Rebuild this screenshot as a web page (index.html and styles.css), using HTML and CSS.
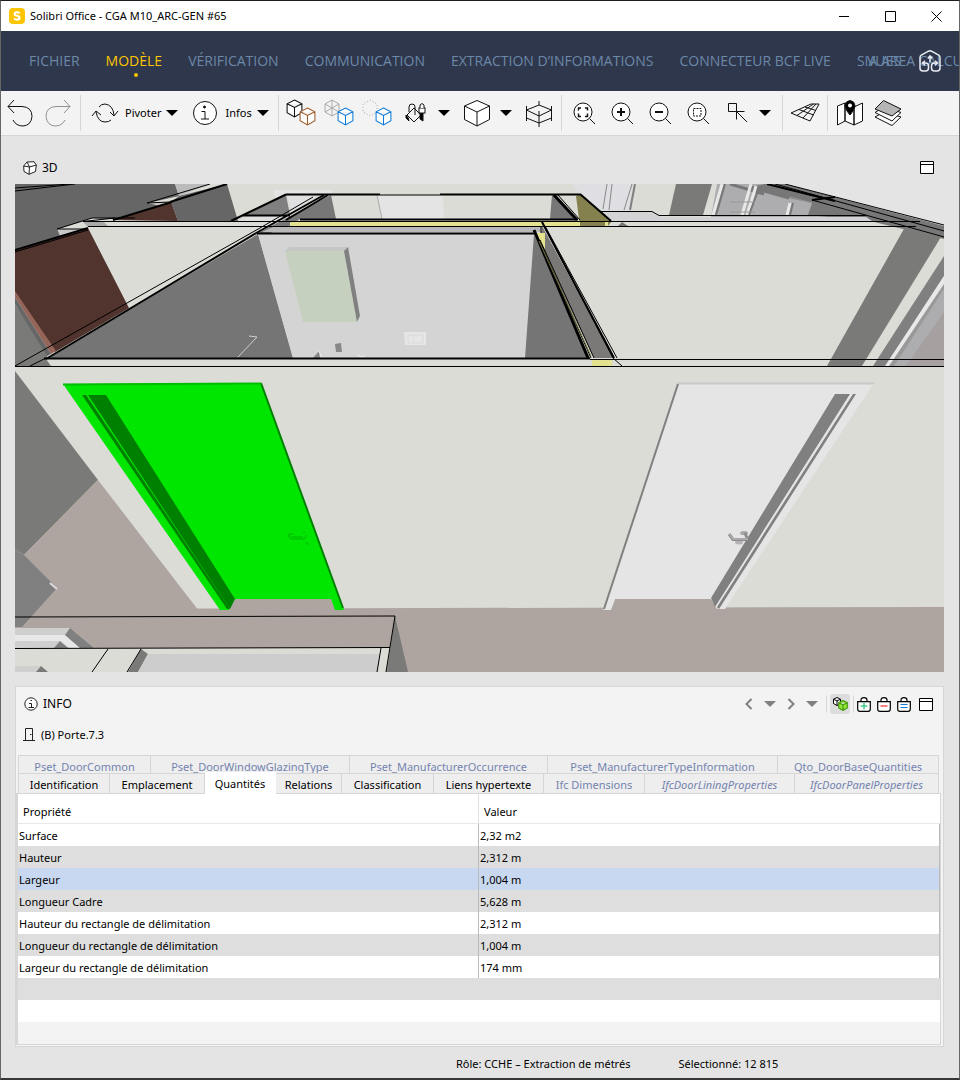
FILE: index.html
```html
<!DOCTYPE html>
<html lang="fr">
<head>
<meta charset="utf-8">
<meta name="viewport" content="width=device-width, initial-scale=1">
<title>Solibri Office - CGA M10_ARC-GEN #65</title>
<link rel="stylesheet" href="styles.css">
</head>
<body>
<svg class="defs" aria-hidden="true">
  <symbol id="cube" viewBox="0 0 16 18"><path d="M8 1 15 4.500V13L8 17 1 13V4.500ZM1 4.500 8 8 15 4.500M8 8V17"/></symbol>
  <symbol id="lens" viewBox="0 0 30 30"><circle cx="14" cy="14" r="9"/><path d="M20.500 20.500 26 26"/></symbol>
  <symbol id="caret" viewBox="0 0 12 6"><path d="M0 0H12L6 6Z"/></symbol>
  <symbol id="frame" viewBox="0 0 14 13"><path d="M.5 .5H13.500V12.500H.5ZM.5 3.500H13.500" fill="#fff" stroke="#000"/></symbol>
  <symbol id="bag" viewBox="0 0 14 15"><path d="M.7 4.700H13.300V12Q13.300 14.300 11 14.300H3Q.7 14.300 .7 12ZM4 4.500V3Q4 .7 7 .7T10 3V4.500" fill="#fff" stroke="#000" stroke-width="1.200"/></symbol>
</svg>
<div class="window">
  <header class="titlebar">
    <svg class="logo" viewBox="0 0 16 16"><rect width="16" height="16" rx="4" fill="#fdc500"/><path d="M10.800 5.300Q9.500 4.200 7.800 4.300 5.600 4.400 5.600 5.900 5.600 7.200 8 7.700 10.600 8.200 10.600 9.900 10.500 11.600 8 11.700 6.300 11.700 5 10.500" fill="none" stroke="#fff" stroke-width="2"/></svg>
    <h1>Solibri Office - CGA M10_ARC-GEN #65</h1>
    <div class="window-buttons">
      <button aria-label="Réduire"><svg viewBox="0 0 11 11"><path d="M0 5.500H10"/></svg></button>
      <button aria-label="Agrandir"><svg viewBox="0 0 11 11"><path d="M.5 .5H10.500V10.500H.5Z"/></svg></button>
      <button aria-label="Fermer"><svg viewBox="0 0 11 11"><path d="M.5 .5 10.500 10.500M10.500 .5 .5 10.500"/></svg></button>
    </div>
  </header>

  <nav class="menu">
    <a href="#fichier">FICHIER</a>
    <a href="#modele" class="active">MODÈLE</a>
    <a href="#verification">VÉRIFICATION</a>
    <a href="#communication">COMMUNICATION</a>
    <a href="#extraction">EXTRACTION D’INFORMATIONS</a>
    <a href="#bcf">CONNECTEUR BCF LIVE</a>
    <a href="#area">SIA AREA CALCULATION</a>
    <div class="menu-end">
      <a href="#vues">VUES</a>
      <button aria-label="Accueil"><svg viewBox="0 0 22 22" fill="none" stroke="#e8ebf2" stroke-width="1.500"><path d="M1 18V7.500Q1 6 2.300 5.200L9.500 1.200Q11 .5 12.500 1.200L19.700 5.200Q21 6 21 7.500V18Q21 21 18 21H15.500Q12.500 21 12.500 18V16Q12.500 13 15.500 13H18M1 18Q1 21 4 21H6.500Q9.500 21 9.500 18V16Q9.500 13 6.500 13H4M11 12V7M8.800 8.500 11 6 13.200 8.500M6 10.800 3.500 13 6 15.200M16 10.800 18.500 13 16 15.200"/></svg></button>
    </div>
  </nav>

  <div class="toolbar" role="toolbar" aria-label="Outils du modèle">
    <button class="tool" aria-label="Annuler"><svg viewBox="0 0 30 30"><path d="M9 2 3 8.500 9 15M3 8.500H17Q27 9 27 18.500 26 27.500 18 28 11 28 8 22"/></svg></button>
    <button class="tool dim" aria-label="Rétablir"><svg viewBox="0 0 30 30"><path d="M21 2 27 8.500 21 15M27 8.500H13Q3 9 3 18.500 4 27.500 12 28 19 28 22 22"/></svg></button>
    <span class="sep"></span>
    <button class="tool labelled"><svg viewBox="0 0 30 30"><path d="M9 9Q11 6 15 6 23 7 24 17M21 22Q19 24 15 24 8 24 6 14M20 14 24 18 28 13M2 18 6 13 11 17"/></svg>Pivoter<svg class="caret"><use href="#caret"/></svg></button>
    <button class="tool labelled"><svg viewBox="0 0 30 30"><circle cx="15" cy="15" r="11.500" fill="#fff"/><circle cx="14.500" cy="9" r="1" fill="#000"/><path d="M11.500 13.500H15V21M11 21H19"/></svg>Infos<svg class="caret"><use href="#caret"/></svg></button>
    <span class="sep"></span>
    <button class="tool" aria-label="Afficher"><svg viewBox="0 0 30 30"><use href="#cube" x="0" y="1" width="17" height="19"/><use href="#cube" x="13" y="9" width="17" height="19" stroke="#9c5c2c"/></svg></button>
    <button class="tool" aria-label="Transparence"><svg viewBox="0 0 30 30"><path d="M8 2 15 6V14L8 18 1 14V6ZM1 6 15 14M15 6 1 14M8 2V18" stroke="#aaa"/><use href="#cube" x="13" y="9" width="17" height="19" stroke="#107cd8"/></svg></button>
    <button class="tool" aria-label="Masquer"><svg viewBox="0 0 30 30"><path d="M8 2 15 6V14L8 18 1 14V6Z" stroke="#aaa" stroke-dasharray="1 2"/><use href="#cube" x="13" y="9" width="17" height="19" stroke="#107cd8"/></svg></button>
    <button class="tool" aria-label="Couleurs"><svg viewBox="0 0 30 30"><path d="M7 17 14 10 21 17 14 24ZM9 14V9Q9 6 12 6T15 9V17"/><path d="M6 17Q9 20 9 23L6 20ZM20 15H23V23L20 21Z" fill="#000"/><rect x="19" y="10" width="6" height="5"/><path d="M20 10V7Q22 4 24 7V10"/></svg></button>
    <button class="tool drop" aria-label="Options de couleurs"><svg class="caret"><use href="#caret"/></svg></button>
    <button class="tool" aria-label="Vue"><svg viewBox="0 0 30 30"><path d="M15 2.500 27.500 8V21.500L15 28 2.500 21.500V8Z" class="solid"/><path d="M2.500 8 15 14 27.500 8M15 14V28"/></svg></button>
    <button class="tool drop" aria-label="Options de vue"><svg class="caret"><use href="#caret"/></svg></button>
    <button class="tool" aria-label="Coupe"><svg viewBox="0 0 30 30"><g fill="none"><path d="M2.500 8V23M27.500 8V23M15 3V7M15 13V29M2.500 12 15 7 27.500 12 15 18ZM2.500 20 15 25 27.500 20"/></g></svg></button>
    <span class="sep"></span>
    <button class="tool" aria-label="Zoom étendu"><svg viewBox="0 0 30 30"><use href="#lens"/><path d="M9.500 12.500V10H12M16 10H18.500V12.500M18.500 15.500V18.500H16M12 18.500H9.500V15.500" stroke-width="1.500"/></svg></button>
    <button class="tool" aria-label="Zoom avant"><svg viewBox="0 0 30 30"><use href="#lens"/><path d="M10 14H18M14 10V18" stroke-width="2"/></svg></button>
    <button class="tool" aria-label="Zoom arrière"><svg viewBox="0 0 30 30"><use href="#lens"/><path d="M10 14H18" stroke-width="2"/></svg></button>
    <button class="tool" aria-label="Zoom fenêtre"><svg viewBox="0 0 30 30"><use href="#lens"/><path d="M10.500 10.500H18V18H10.500Z" stroke-dasharray="2 1"/></svg></button>
    <button class="tool" aria-label="Sélection"><svg viewBox="0 0 30 30"><path d="M7.500 5.500H15.500V13.500H7.500ZM15.500 13.500H23.500M15.500 13.500V21.500M15.500 13.500 26 24"/></svg></button>
    <button class="tool drop" aria-label="Options de sélection"><svg class="caret"><use href="#caret"/></svg></button>
    <span class="sep"></span>
    <button class="tool" aria-label="Grille"><svg viewBox="0 0 30 30"><path d="M1 15 21 6H29L20 23ZM7 17.500 23.500 6M13 20 26 6M15 9 26 12.500M9 11.500 23.500 17"/></svg></button>
    <span class="sep"></span>
    <button class="tool" aria-label="Carte"><svg viewBox="0 0 30 30"><path d="M2.500 8 10 5V23L2.500 27ZM10 5 19 9V27L10 23ZM19 9 27.500 5V23L19 27Z" class="solid"/><path d="M15 17Q10 11 10 7.500 10.500 3 15 2.500 19.500 3 20 7.500 20 11 15 17Z" fill="#000"/><circle cx="15" cy="7.500" r="2" stroke="none"/></svg></button>
    <button class="tool" aria-label="Calques"><svg viewBox="0 0 30 30"><path d="M2 19 19 27.500 28 19 11 14Z" class="solid"/><path d="M2 14.500 19 23 28 14.500 11 9Z"/><path d="M2 11 10.500 2.500 28 11 19 18Z" fill="#b5b5b5"/></svg></button>
  </div>

  <main>
    <section class="view" aria-labelledby="view-title">
      <header class="pane-head">
        <svg class="view-icon" viewBox="0 0 14 14" fill="#fff" stroke="#222"><path d="M.7 5 4 1 11 .7 13.300 4 12.500 10.500 6 13.300 1 10.500ZM.7 5 6.500 6 13.300 4M6.500 6 6 13.300M4 1 6.500 6"/></svg>
        <h2 id="view-title">3D</h2>
        <button class="pane-max" aria-label="Agrandir la vue 3D"><svg><use href="#frame"/></svg></button>
      </header>
      <svg class="scene" viewBox="15 184 929 488" role="img" aria-label="Vue 3D, porte sélectionnée en vert">
        <rect x="15" y="184" width="929" height="488" fill="#dadcd5"/>
        <!-- back-left walls -->
        <path d="M15 184H175L179 196 148 203 171 202 113 219 92 218 58 229 84 229 15 250Z" fill="#666"/>
        <path d="M175 184H210L179 196Z" fill="#bbb"/>
        <path d="M179 196 227 184 238 221H178L171 202Z" fill="#666"/>
        <path d="M148 203 171 202 160 206Z" fill="#ccc"/>
        <path d="M113 220 171 202 178 221ZM15 250 88 228 129 308 55 352 15 292Z" fill="#50342d"/>
        <path d="M15 304 48 354 46 360 15 367Z" fill="#7a7a78"/>
        <path d="M15 291 56 351 51 354 15 297Z" fill="#96655a"/>
        <path d="M15 297 51 354 47 356 15 304Z" fill="#666"/>
        <path d="M57 229 84 229 60 236Z" fill="#c8c8c8"/>
        <path d="M83 222H104L109 227H88Z" fill="#a9a9a9"/>
        <g fill="none" stroke="#000">
          <path d="M15 188 70 184M15 191 75 184M147 203 210 184M147 203 170 202M57 229 92 218H115M57 229H88M15 252 88 230"/>
          <path d="M170 202 227 184M15 250 88 228M113 220 172 202" stroke-width="2"/>
        </g>
        <!-- small room, top left -->
        <path d="M273 190H332V195H286L276 200Z" fill="#e4e4e4"/>
        <path d="M242 215 286 195 290 215Z" fill="#808080"/>
        <path d="M288 196H316L291 213Z" fill="#e0e0e0"/>
        <path d="M243 216H287L275 221H246Z" fill="#e0e0e0"/>
        <path d="M258 233 331 195 336 219H300L290 226 270 233Z" fill="#777"/>
        <!-- upper room -->
        <path d="M377 195H443L444 219H382Z" fill="#e4e4e4"/>
        <path d="M377 195 382 219" stroke="#aaa"/>
        <path d="M552 195 550 219H574L556 195Z" fill="#777"/>
        <path d="M576 196 580 226H608L612 221 580 194Z" fill="#84814f"/>
        <path d="M290 221H608V226.500H290Z" fill="#e3e291"/>
        <path d="M580 221H605V226H580Z" fill="#84814f"/>
        <path d="M273 227H542V232H262Z" fill="#b8b8b8"/>
        <!-- back-right rooms -->
        <path d="M573 184H632L630 211H603L579 193Z" fill="#dfdfe3"/>
        <path d="M607 184 603 209M612 184 609 210M632 184 624 210" stroke="#888" fill="none"/>
        <path d="M635 184 630 210" stroke="#808080" stroke-width="2"/>
        <path d="M676 184H712L703 215H669Z" fill="#7a7a78"/>
        <path d="M717 184H765L870 217H711Z" fill="#adadb0"/>
        <path d="M765 184H785L944 225V239L870 221 808 215 812 203 789 198 750 187Z" fill="#777"/>
        <path d="M730 184 764 194M750 187 789 198" stroke="#777" stroke-width="3"/>
        <path d="M722 184 713 215M751 184 742 215M756 186 747 215M790 203 787 215" stroke="#e8e8e8" stroke-width="3"/>
        <path d="M725 184 716 215M759 188 749 215M793 203 790 215" stroke="#777" stroke-width="2"/>
        <path d="M730 202H755M730 212H755M790 197 812 203" stroke="#999"/>
        <path d="M603 212H652L660 217H866L872 221H612Z" fill="#d3d3d5"/>
        <path d="M785 184H944V226Z" fill="#e4e4e4"/>
        <path d="M622 222 628 226H618Z" fill="#777"/>
        <g fill="none" stroke="#000">
          <path d="M785 184 944 225M775 184 944 231M812 200 944 237M83 221.500H920M88 226.500H916M83 221.500 115 218H135"/>
          <path d="M600 211.500H652L659 215.500H866"/>
          <path d="M767 184 835 201M812 200 835 197" stroke-width="2"/>
        </g>
        <path d="M905 227 941 237 862 366H827Z" fill="#7a7a78"/>
        <path d="M944 256V276L886 366H873Z" fill="#808080"/>
        <path d="M944 276V286L891 366H885Z" fill="#e8e8e8"/>
        <path d="M944 284V366H889Z" fill="#999"/>
        <path d="M944 289V366H894Z" fill="#adadb0"/>
        <path d="M944 312V366H906Z" fill="#a6a0a0"/>
        <!-- main room -->
        <path d="M46 359 258 234 293 358Z" fill="#757575"/>
        <path d="M258 234H534L525 358H293Z" fill="#d4d4d4"/>
        <path d="M534 234 525 358H590Z" fill="#757575"/>
        <path d="M542 226 614 358H594L540 246Z" fill="#7a7978"/>
        <path d="M536 233H545V250L539 240Z" fill="#e3e291"/>
        <path d="M592 360H612V366H592Z" fill="#e3e291"/>
        <path d="M15 367 31 359H46L51 366Z" fill="#7a7a78"/>
        <path d="M285 251H344L357 322H303Z" fill="#c6d0be"/>
        <path d="M285 251 289 247H347L344 251Z" fill="#c5c5c5"/>
        <path d="M344 251 348 247 360 316 357 322Z" fill="#808080"/>
        <path d="M404 332H426V345H405Z" fill="#e6e6e6"/>
        <path d="M408 335H423V343H408ZM414 335V343" fill="none" stroke="#dadada"/>
        <path d="M335 344 341 343 342 352H336ZM313 358 319 351 320 358Z" fill="#888"/>
        <path d="M318 350 322 357M365 356Q362 358 357 355" stroke="#eee" fill="none"/>
        <path d="M238 357 257 337 249 336" fill="none" stroke="#d2cdd0"/>
        <g fill="none" stroke="#000">
          <path d="M15 366 127 303 260 228M30 366 46 358M15 366.500H944M590 359.500H944"/>
          <path d="M46 359 258 232 324 195M231 221 286 194.500M243 215.500H290M286 220 328 195" stroke-width="2"/>
          <path d="M260 228 313 197"/>
          <path d="M286 194.500H380M440 194.500H580M300 219.500H578M44 358.500H590M580 194 611 221" stroke-width="2"/>
          <path d="M380 195H440M541 227V233"/>
          <path d="M257 233.500H535" stroke-width="2"/>
          <path d="M554 195 577 220M534 230 588 358" stroke-width="3"/>
          <path d="M558 195 580 220M538 238 591 358M540 240 594 358M542 222 613 358 622 366M545 226 617 358"/>
          <path d="M542 222 614 358" stroke-width="2"/>
        </g>
        <path d="M539 241 591 356" stroke="#77743d"/>
        <!-- corridor floor -->
        <path d="M15 371 98 480 24 555 15 549Z" fill="#7a7a78"/>
        <path d="M98 480 197 608.500 944 607V672H15V549L24 555Z" fill="#aea5a0"/>
        <path d="M15 549 24 555 57 588 22 627H15Z" fill="#808080"/>
        <path d="M50 583 57 589" stroke="#ddd" stroke-width="2"/>
        <!-- selected door -->
        <path d="M235 599H331L336 610H229Z" fill="#aea5a0"/>
        <path d="M63 384 261 383 344 610H335L331 599H235L229 610H220Z" fill="#00e600"/>
        <path d="M88 395H106L235 599 230 609Z" fill="#008000"/>
        <path d="M82 395H86L230 609H227Z" fill="#008000"/>
        <path d="M261 383 343 608" stroke="#008000" stroke-width="2"/>
        <path d="M63 384.500 261 383.500" stroke="#00bd00" stroke-width="2"/>
        <path d="M294 534H289Q288 538 291 539H304L307 535M291 537H303M303 533 305 532M306 542 308 545" fill="none" stroke="#00b400"/>
        <!-- second door -->
        <path d="M615 599H711L717 609H611Z" fill="#aea5a0"/>
        <path d="M678 383H874L725 609H717L711 599H615L611 610H603Z" fill="#e5e5e5"/>
        <path d="M677 383.500H874" stroke="#c8c8c8" stroke-width="2"/>
        <path d="M678 384 604 609" stroke="#808080" stroke-width="2"/>
        <path d="M835 394H850L715 607 711 598ZM853 394H856L719 609 717 607Z" fill="#808080"/>
        <ellipse cx="744" cy="533" rx="4" ry="2" fill="#a9a6aa"/>
        <ellipse cx="739" cy="542" rx="4" ry="2.500" fill="#b5b1b6"/>
        <path d="M729 534 733 539.500H748M745 533 747 538" fill="none" stroke="#8f8c90" stroke-width="3"/>
        <path d="M729 534 733 539H748" fill="none" stroke="#c7c2c8"/>
        <!-- foreground partitions -->
        <path d="M15 628H70L94 648H15Z" fill="#cfcfcf"/>
        <path d="M15 635H65L80 648H70L60 641H15Z" fill="#e8e8e8"/>
        <path d="M70 628 94 648H80L65 635ZM60 641 68 648H54Z" fill="#808080"/>
        <path d="M15 648H390L386 672H15Z" fill="#dadcd5"/>
        <path d="M15 666H41L36 672H15Z" fill="#cfcfcf"/>
        <path d="M41 666 48 672H36ZM141 649 148 654 138 672H128Z" fill="#7a7a78"/>
        <path d="M148 654H380L378 672H138Z" fill="#cdcdcd"/>
        <path d="M395 616 408 672H387Z" fill="#7a7a78"/>
        <path d="M15 617 395 616 386 672M15 648.500 390 647.500M108 649 92 672M141 649 127 672M381 648 377 672" fill="none" stroke="#000"/>
      </svg>
    </section>

    <section class="info" aria-labelledby="info-title">
      <header class="pane-head">
        <svg class="info-icon" viewBox="0 0 14 14" fill="none" stroke="#222"><circle cx="7" cy="7" r="6.200" fill="#fff"/><path d="M5 6.500H7.500V10.500M4.500 10.500H10M6.500 3.500H8"/></svg>
        <h2 id="info-title">INFO</h2>
        <div class="info-tools">
          <button aria-label="Précédent"><svg viewBox="0 0 14 14"><path d="M9.500 2 4.500 7 9.500 12"/></svg></button>
          <button aria-label="Historique précédent"><svg class="caret"><use href="#caret"/></svg></button>
          <button aria-label="Suivant"><svg viewBox="0 0 14 14"><path d="M4.500 2 9.500 7 4.500 12"/></svg></button>
          <button aria-label="Historique suivant"><svg class="caret"><use href="#caret"/></svg></button>
          <div class="link-tools">
            <span class="sep"></span>
            <button class="pressed" aria-pressed="true" aria-label="Lier à la sélection"><svg viewBox="0 0 16 16"><use href="#cube" x="1" y="1" width="8" height="9" fill="#fff" stroke="#000" stroke-width="2"/><use href="#cube" x="6" y="4" width="10" height="11" fill="#8fe83a" stroke="#4a9c10" stroke-width="2"/></svg></button>
            <span class="sep"></span>
            <div class="bags">
              <button aria-label="Ajouter au panier"><svg viewBox="0 0 14 15"><use href="#bag"/><path d="M3.500 9H10.500M7 5.500V12.500" stroke="#00b860"/></svg></button>
              <button aria-label="Retirer du panier"><svg viewBox="0 0 14 15"><use href="#bag"/><path d="M3.500 9H10.500" stroke="#f00"/></svg></button>
              <button aria-label="Définir le panier"><svg viewBox="0 0 14 15"><use href="#bag"/><path d="M3.500 7.500H10.500M3.500 10.500H10.500" stroke="#107cd8"/></svg></button>
            </div>
          </div>
          <button class="pane-max" aria-label="Agrandir Info"><svg><use href="#frame"/></svg></button>
        </div>
      </header>
      <p class="component"><svg viewBox="0 0 12 14" fill="none" stroke="#222"><path d="M2.500 12.500V.5H9.500V12.500M0 12.500H12M7 6.500H8.500"/></svg>(B) Porte.7.3</p>

      <div class="tabs" role="tablist">
        <div class="tab-row upper">
          <button role="tab">Pset_DoorCommon</button>
          <button role="tab">Pset_DoorWindowGlazingType</button>
          <button role="tab">Pset_ManufacturerOccurrence</button>
          <button role="tab">Pset_ManufacturerTypeInformation</button>
          <button role="tab">Qto_DoorBaseQuantities</button>
        </div>
        <div class="tab-row lower">
          <button role="tab">Identification</button>
          <button role="tab">Emplacement</button>
          <button role="tab" aria-selected="true">Quantités</button>
          <button role="tab">Relations</button>
          <button role="tab">Classification</button>
          <button role="tab">Liens hypertexte</button>
          <button role="tab" class="ifc">Ifc Dimensions</button>
          <button role="tab" class="ifc type">IfcDoorLiningProperties</button>
          <button role="tab" class="ifc type">IfcDoorPanelProperties</button>
        </div>
      </div>

      <div class="sheet" role="tabpanel">
        <table>
          <thead><tr><th scope="col">Propriété</th><th scope="col">Valeur</th></tr></thead>
          <tbody>
            <tr><td>Surface</td><td>2,32 m2</td></tr>
            <tr><td>Hauteur</td><td>2,312 m</td></tr>
            <tr class="selected"><td>Largeur</td><td>1,004 m</td></tr>
            <tr><td>Longueur Cadre</td><td>5,628 m</td></tr>
            <tr><td>Hauteur du rectangle de délimitation</td><td>2,312 m</td></tr>
            <tr><td>Longueur du rectangle de délimitation</td><td>1,004 m</td></tr>
            <tr><td>Largeur du rectangle de délimitation</td><td>174 mm</td></tr>
          </tbody>
          <tbody class="filler" aria-hidden="true">
            <tr><td colspan="2"></td></tr>
            <tr><td colspan="2"></td></tr>
            <tr><td colspan="2"></td></tr>
          </tbody>
        </table>
      </div>
    </section>
  </main>

  <footer class="status"><span>Rôle: CCHE – Extraction de métrés</span><span>Sélectionné: 12 815</span></footer>
</div>
</body>
</html>
```
FILE: styles.css
```css
* { box-sizing: border-box; }

body {
  margin: 0;
  background: #e4e4e4;
  color: #000;
  font: 11px/16px "Noto Sans", "Open Sans", sans-serif;
}

h1, h2, p { margin: 0; font-size: 12px; font-weight: 400; }

button {
  margin: 0;
  padding: 0;
  border: 0;
  background: none;
  color: inherit;
  font: inherit;
}

.defs { position: absolute; width: 0; height: 0; }

.window {
  display: flex;
  flex-direction: column;
  min-height: 100vh;
  border: 1px solid #666;
  border-top-color: #1d1d1f;
  border-bottom: 2px solid #3a3739;
}

.titlebar {
  display: flex;
  align-items: center;
  gap: 5px;
  height: 30px;
  padding-left: 8px;
  background: #fff;
}
.titlebar h1 { font-size: 11px; }
.logo { width: 16px; height: 16px; }
.window-buttons { display: flex; margin-left: auto; }
.window-buttons button { display: grid; place-items: center; width: 46px; height: 30px; }
.window-buttons svg { width: 11px; height: 11px; fill: none; stroke: #000; }

.menu {
  position: relative;
  display: flex;
  align-items: center;
  gap: 26px;
  height: 60px;
  padding-left: 28px;
  overflow: hidden;
  background: #2f374c;
  font-family: "Open Sans", "Noto Sans", sans-serif;
  font-size: 14px;
  white-space: nowrap;
}
.menu a { position: relative; color: #6b88a8; text-decoration: none; }
.menu .active { color: #fdc500; }
.menu .active::after {
  content: "";
  position: absolute;
  top: 20px;
  left: 50%;
  width: 4px;
  height: 4px;
  border-radius: 50%;
  background: #fdc500;
}
.menu-end {
  position: absolute;
  right: 18px;
  display: flex;
  align-items: center;
  gap: 18px;
}
.menu-end svg { display: block; width: 22px; height: 22px; }

.toolbar {
  display: flex;
  align-items: center;
  height: 45px;
  border-bottom: 1px solid #d6d6d6;
  background: #f3f3f3;
}
.sep { width: 1px; height: 36px; margin: 0 3px; background: #d6d6d6; }
.tool { display: grid; place-items: center; width: 38px; height: 44px; }
.tool svg { width: 30px; height: 30px; fill: #fff; stroke: #111; }
.tool svg:first-child path:first-child { fill: none; }
.tool svg:first-child .solid:first-child { fill: #fff; }
.tool.dim svg { stroke: #909090; }
.tool.drop { width: 24px; padding-right: 4px; }
.labelled { display: flex; align-items: center; gap: 5px; width: auto; padding: 0 6px; }
.tool .caret, .caret { width: 12px; height: 6px; fill: #000; stroke: none; }

main { display: flex; flex: 1; flex-direction: column; gap: 14px; padding: 15px 15px 0 14px; }

.pane-head { display: flex; align-items: center; gap: 5px; height: 33px; padding: 0 10px 0 8px; }
.pane-head .pane-max { margin-left: auto; }
.pane-max svg { display: block; width: 14px; height: 13px; }
.view-icon, .info-icon { width: 14px; height: 14px; }
.scene { display: block; width: 100%; height: auto; }

.info {
  display: flex;
  flex: 1;
  flex-direction: column;
  padding: 0 2px 1px 0;
  border: 1px solid #d6d6d6;
  background: #f3f3f3;
}
.info .pane-head { height: 34px; padding-right: 8px; }
.info-tools { display: flex; align-items: center; gap: 8px; margin-left: auto; }
.info-tools button { flex: none; }
.info-tools svg { display: block; width: 14px; height: 14px; fill: none; stroke: #808080; stroke-width: 2; }
.info-tools .caret { width: 12px; height: 6px; fill: #808080; stroke: none; }
.info-tools .sep { height: 16px; margin: 0; }
.link-tools { display: flex; align-items: center; gap: 3px; }
.bags { display: flex; gap: 6px; }
.info-tools .bags svg { height: 15px; stroke-width: 1; }
.info-tools .pane-max svg { height: 13px; stroke-width: 1; }
.info-tools .pressed { padding: 2px; border-radius: 3px; background: #dcdcdc; }
.info-tools .pressed svg { width: 16px; height: 16px; }
.component { display: flex; align-items: center; gap: 6px; height: 28px; padding-left: 7px; font-size: 11px; }
.component svg { width: 12px; height: 14px; }

.tabs { padding: 6px 2px 0; }
.tab-row { display: grid; border-left: 1px solid #d6d6d6; }
.tab-row button {
  height: 20px;
  border: solid #d6d6d6;
  border-width: 1px 1px 0 0;
  background: #eee;
  line-height: 22px;
  overflow: hidden;
  white-space: nowrap;
}
.upper { grid-template-columns: 132fr 199fr 198fr 230fr 161fr; height: 18px; color: #7483ae; }
.lower { grid-template-columns: 91fr 95fr 71fr 66fr 92fr 110fr 101fr 150fr 144fr; }
.lower .ifc { color: #7483ae; }
.lower .type { font-style: italic; }
.tab-row.lower [aria-selected="true"] { position: relative; height: 22px; margin: -1px 0; border-color: #fff; background: #fff; line-height: 18px; }

.sheet { flex: 1; border: 1px solid #d6d6d6; border-left-width: 2px; background: #fff; }
table { width: 100%; border-collapse: separate; border-spacing: 0; table-layout: fixed; }
th, td { padding: 2px 1px 0; text-align: left; font-weight: 400; }
th { height: 30px; padding: 6px 5px 0; border-bottom: 1px solid #e8e8e8; }
td { height: 22px; border-right: 1px solid #bbb; }
th:first-child { border-right: 1px solid #e0e0e0; }
tbody tr:nth-child(even), .filler tr:first-child { background: #dedede; }
tbody .selected { background: #c8d8f0; }
.filler td { border: 0; }
.filler tr:nth-child(2) { background: #fff; }
.filler tr:nth-child(3) { background: #f3f3f3; }

.status { display: flex; gap: 48px; height: 31px; padding: 3px 0 0 455px; align-items: center; }
```
